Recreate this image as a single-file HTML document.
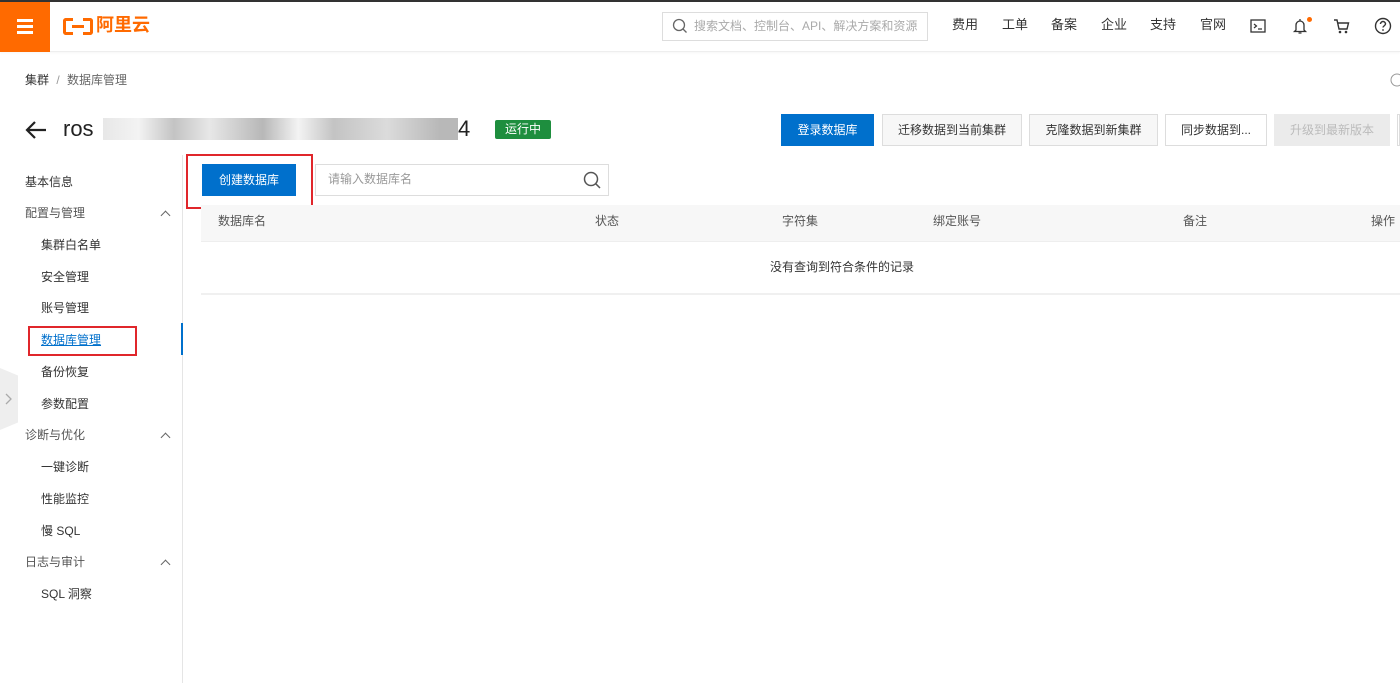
<!DOCTYPE html>
<html><head><meta charset="utf-8"><style>
*{margin:0;padding:0;box-sizing:border-box}
body{width:1400px;height:683px;overflow:hidden;background:#fff;font-family:"Liberation Sans","Noto Sans CJK SC",sans-serif;color:#333;position:relative;font-size:12px}
.a{position:absolute;white-space:nowrap;line-height:1.2}
.nav{font-size:13px;color:#333;top:17px}
.side{font-size:12px;color:#333}
.btn{position:absolute;top:114px;height:32px;border:1px solid #ddd;background:#f7f7f7;font-size:12px;color:#333;text-align:center;line-height:30px}
.th{top:214px;font-size:12px;color:#555}
.chev{position:absolute;width:7px;height:7px;border-left:1px solid #666;border-top:1px solid #666;transform:rotate(45deg)}
</style></head><body>
<div class="a" style="left:0;top:0;width:1400px;height:2px;background:#333"></div>
<div class="a" style="left:0;top:2px;width:1400px;height:50px;border-bottom:1px solid #eee;box-shadow:0 1px 2px rgba(0,0,0,.04)"></div>
<div class="a" style="left:0;top:2px;width:50px;height:50px;background:#ff6a00"></div>
<div class="a" style="left:17px;top:19px;width:16px;height:3px;background:#fff;box-shadow:0 6px 0 #fff,0 12px 0 #fff"></div>
<div class="a" style="left:63px;top:18px;width:10px;height:17px;border:3px solid #ff6a00;border-right:none;border-radius:3px 0 0 3px"></div>
<div class="a" style="left:83px;top:18px;width:10px;height:17px;border:3px solid #ff6a00;border-left:none;border-radius:0 3px 3px 0"></div>
<div class="a" style="left:72px;top:25px;width:12px;height:3px;background:#ff6a00"></div>
<div class="a" style="left:96px;top:15px;font-size:18px;font-weight:bold;color:#ff6a00">阿里云</div>
<div class="a" style="left:662px;top:12px;width:266px;height:29px;border:1px solid #ddd"></div>
<svg class="a" style="left:672px;top:18px" width="16" height="16" viewBox="0 0 16 16"><circle cx="7" cy="7" r="5.5" fill="none" stroke="#666" stroke-width="1.3"/><path d="M11 11l3.5 3.5" stroke="#666" stroke-width="1.3"/></svg>
<div class="a" style="left:694px;top:19px;font-size:12px;color:#aaa">搜索文档、控制台、API、解决方案和资源</div>
<div class="a nav" style="left:952px">费用</div>
<div class="a nav" style="left:1002px">工单</div>
<div class="a nav" style="left:1051px">备案</div>
<div class="a nav" style="left:1101px">企业</div>
<div class="a nav" style="left:1150px">支持</div>
<div class="a nav" style="left:1200px">官网</div>
<svg class="a" style="left:1250px;top:18px" width="16" height="16" viewBox="0 0 16 16"><rect x="1" y="2" width="14" height="12" fill="none" stroke="#333" stroke-width="1.3"/><path d="M4 6l2.5 2L4 10M8 11h4" fill="none" stroke="#333" stroke-width="1.2"/></svg>
<svg class="a" style="left:1292px;top:17px" width="16" height="18" viewBox="0 0 16 18"><path d="M4 13V8a4 4 0 018 0v5l1.5 1.5h-11z M6.5 16h3M8 2v2" fill="none" stroke="#333" stroke-width="1.3"/></svg>
<div class="a" style="left:1307px;top:17px;width:5px;height:5px;border-radius:50%;background:#ff6a00"></div>
<svg class="a" style="left:1334px;top:18px" width="16" height="16" viewBox="0 0 16 16"><path d="M0 2h3l2 9h8l1.5-6H4" fill="none" stroke="#333" stroke-width="1.4"/><circle cx="6" cy="14" r="1.3" fill="#333"/><circle cx="12" cy="14" r="1.3" fill="#333"/></svg>
<svg class="a" style="left:1374px;top:17px" width="18" height="18" viewBox="0 0 18 18"><circle cx="9" cy="9" r="7.5" fill="none" stroke="#333" stroke-width="1.4"/><path d="M6.5 7a2.5 2.5 0 115 0c0 1.5-2.5 2-2.5 3.5" fill="none" stroke="#333" stroke-width="1.4"/><circle cx="9" cy="13" r=".9" fill="#333"/></svg>

<div class="a" style="left:25px;top:73px;font-size:12px;color:#333">集群 <span style="color:#999;margin:0 4px">/</span> <span style="color:#666">数据库管理</span></div>
<svg class="a" style="left:1390px;top:73px" width="14" height="14" viewBox="0 0 14 14"><circle cx="7" cy="7" r="6" fill="none" stroke="#999"/></svg>

<svg class="a" style="left:24px;top:120px" width="24" height="20" viewBox="0 0 24 20"><path d="M22 10H3M11 2L3 10l8 8" fill="none" stroke="#222" stroke-width="2.2"/></svg>
<div class="a" style="left:63px;top:116px;font-size:22px;color:#222">ros</div>
<div class="a" style="left:103px;top:118px;width:355px;height:22px;background:linear-gradient(90deg,#ddd,#eee 10%,#aaa 20%,#ddd 30%,#999 45%,#eee 55%,#aaa 65%,#ccc 80%,#999 95%);opacity:.7"></div>
<div class="a" style="left:458px;top:116px;font-size:22px;color:#222">4</div>
<div class="a" style="left:495px;top:120px;width:56px;height:19px;background:#1e8e3e;border-radius:2px;color:#fff;font-size:12px;text-align:center;line-height:19px">运行中</div>

<div class="btn" style="left:781px;width:93px;background:#0070cc;border-color:#0070cc;color:#fff">登录数据库</div>
<div class="btn" style="left:882px;width:140px">迁移数据到当前集群</div>
<div class="btn" style="left:1029px;width:129px">克隆数据到新集群</div>
<div class="btn" style="left:1165px;width:102px;background:#fff">同步数据到...</div>
<div class="btn" style="left:1274px;width:116px;background:#ebebeb;border-color:#ebebeb;color:#bbb">升级到最新版本</div>
<div class="a" style="left:1397px;top:114px;width:3px;height:32px;border:1px solid #ddd"></div>

<div class="a" style="left:182px;top:155px;width:1px;height:528px;background:#e5e5e5"></div>
<div class="a" style="left:181px;top:323px;width:2px;height:32px;background:#0070cc"></div>
<div class="a" style="left:0;top:368px;width:18px;height:62px;background:#eee;clip-path:polygon(0 0,100% 12%,100% 88%,0 100%)"></div>
<svg class="a" style="left:5px;top:393px" width="8" height="12" viewBox="0 0 8 12"><path d="M1 1l5 5-5 5" fill="none" stroke="#aaa" stroke-width="1.3"/></svg>

<div class="a side" style="left:25px;top:175px">基本信息</div>
<div class="a side" style="left:25px;top:206px;color:#555">配置与管理</div><div class="chev" style="left:162px;top:212px"></div>
<div class="a side" style="left:41px;top:238px">集群白名单</div>
<div class="a side" style="left:41px;top:270px">安全管理</div>
<div class="a side" style="left:41px;top:301px">账号管理</div>
<div class="a" style="left:28px;top:326px;width:109px;height:30px;border:2px solid #e0262b"></div>
<div class="a side" style="left:41px;top:333px;color:#0070cc;text-decoration:underline">数据库管理</div>
<div class="a side" style="left:41px;top:365px">备份恢复</div>
<div class="a side" style="left:41px;top:397px">参数配置</div>
<div class="a side" style="left:25px;top:428px;color:#555">诊断与优化</div><div class="chev" style="left:162px;top:434px"></div>
<div class="a side" style="left:41px;top:460px">一键诊断</div>
<div class="a side" style="left:41px;top:492px">性能监控</div>
<div class="a side" style="left:41px;top:524px">慢 SQL</div>
<div class="a side" style="left:25px;top:555px;color:#555">日志与审计</div><div class="chev" style="left:162px;top:561px"></div>
<div class="a side" style="left:41px;top:587px">SQL 洞察</div>

<div class="a" style="left:186px;top:154px;width:127px;height:55px;border:2px solid #e0262b"></div>
<div class="a" style="left:202px;top:164px;width:94px;height:32px;background:#0070cc;color:#fff;font-size:12px;text-align:center;line-height:32px">创建数据库</div>
<div class="a" style="left:315px;top:164px;width:294px;height:32px;border:1px solid #ddd"></div>
<div class="a" style="left:328px;top:172px;font-size:12px;color:#999">请输入数据库名</div>
<svg class="a" style="left:583px;top:171px" width="18" height="18" viewBox="0 0 18 18"><circle cx="8" cy="8" r="6.5" fill="none" stroke="#555" stroke-width="1.5"/><path d="M12.8 12.8L17 17" stroke="#555" stroke-width="1.5"/></svg>

<div class="a" style="left:201px;top:205px;width:1199px;height:37px;background:#f7f7f7;border-bottom:1px solid #eee"></div>
<div class="a th" style="left:218px">数据库名</div>
<div class="a th" style="left:595px">状态</div>
<div class="a th" style="left:782px">字符集</div>
<div class="a th" style="left:933px">绑定账号</div>
<div class="a th" style="left:1183px">备注</div>
<div class="a th" style="left:1371px">操作</div>
<div class="a" style="left:770px;top:260px;font-size:12px;color:#333">没有查询到符合条件的记录</div>
<div class="a" style="left:201px;top:293px;width:1199px;height:2px;background:#f0f0f0"></div>
</body></html>
